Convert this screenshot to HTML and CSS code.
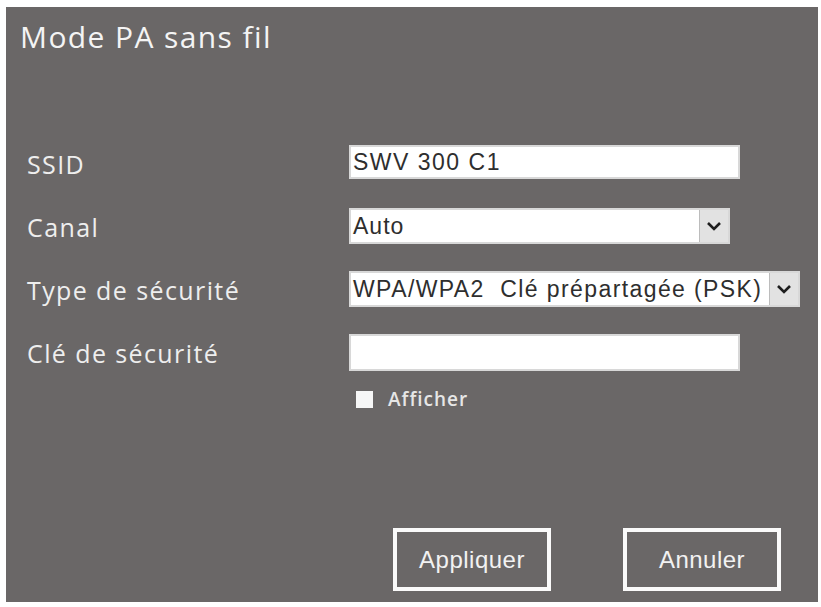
FILE: index.html
```html
<!DOCTYPE html>
<html lang="fr">
<head>
  <meta charset="UTF-8">
  <meta name="viewport" content="width=device-width, initial-scale=1.0">
  <title>Mode PA sans fil</title>
  <link rel="stylesheet" href="styles.css">
</head>
<body>
  <div class="panel">
    <h1 class="titre">Mode PA sans fil</h1>

    <div class="formulaire">
      <label class="etiquette" for="ssid">SSID</label>
      <input class="champ" id="ssid" type="text" value="SWV 300 C1">

      <label class="etiquette">Canal</label>
      <div class="liste liste-canal">
        <span class="valeur">Auto</span>
        <span class="fleche">
          <svg width="16" height="10" viewBox="0 0 16 10"><path d="M2 2 L8 8 L14 2" fill="none" stroke="#1e1e1e" stroke-width="2.6"/></svg>
        </span>
      </div>

      <label class="etiquette">Type de sécurité</label>
      <div class="liste liste-type">
        <span class="valeur">WPA/WPA2&nbsp; Clé prépartagée (PSK)</span>
        <span class="fleche">
          <svg width="16" height="10" viewBox="0 0 16 10"><path d="M2 2 L8 8 L14 2" fill="none" stroke="#1e1e1e" stroke-width="2.6"/></svg>
        </span>
      </div>

      <label class="etiquette" for="cle">Clé de sécurité</label>
      <input class="champ champ-cle" id="cle" type="password" value="">

      <label class="afficher"><span class="case"></span>Afficher</label>
    </div>

    <div class="boutons">
      <button class="bouton">Appliquer</button>
      <button class="bouton">Annuler</button>
    </div>
  </div>
</body>
</html>
```

FILE: styles.css
```css
body {
  margin: 0;
  background-color: #ffffff;
}

.panel {
  margin: 7px 3px 0 6px;
  height: 595px;
  box-sizing: border-box;
  background-color: #6a6767;
  padding: 10px 0 0 14px;
  display: flex;
  flex-direction: column;
}

.titre {
  margin: 0;
  font-family: "Open Sans", sans-serif;
  font-weight: normal;
  font-size: 30px;
  letter-spacing: 1.4px;
  color: #f4f4f4;
  line-height: 40px;
}

.formulaire {
  margin-top: 88px;
  padding-left: 7px;
  display: grid;
  grid-template-columns: 322px auto;
  grid-template-rows: repeat(4, 36px) auto;
  align-items: start;
  row-gap: 27px;
}

.etiquette {
  align-self: center;
  margin-top: 2px;
  font-family: "Open Sans", sans-serif;
  font-size: 25px;
  letter-spacing: 1.4px;
  color: #eeeeee;
  line-height: 34px;
}

.champ {
  width: 391px;
  height: 34px;
  box-sizing: border-box;
  margin: 0;
  border: 2px solid #d8d8d8;
  background-color: #ffffff;
  font-family: "Liberation Sans", Arial, sans-serif;
  font-size: 23px;
  letter-spacing: 1.5px;
  color: #2e2e2e;
  padding: 0 2px;
  outline: none;
}

.champ-cle {
  height: 37px;
}

.liste {
  display: flex;
  align-items: stretch;
  height: 36px;
  box-sizing: border-box;
  border: 2px solid #d8d8d8;
  background-color: #ffffff;
  font-family: "Liberation Sans", Arial, sans-serif;
  font-size: 23px;
  letter-spacing: 1px;
  color: #2e2e2e;
}

.liste-canal {
  width: 381px;
}

.liste-type {
  width: 451px;
  letter-spacing: 1.4px;
}

.valeur {
  flex: 1;
  padding-left: 2px;
  line-height: 32px;
  white-space: nowrap;
  overflow: hidden;
}

.fleche {
  width: 28px;
  display: flex;
  align-items: center;
  justify-content: center;
  background-color: #e2e2e2;
  border-left: 1px solid #bcbcbc;
}

.afficher {
  grid-column: 2;
  margin-top: -11px;
  display: flex;
  align-items: center;
  gap: 15px;
  padding-left: 7px;
  font-family: "Open Sans", sans-serif;
  font-weight: 600;
  font-size: 19px;
  letter-spacing: 1px;
  color: #e6e6e6;
}

.case {
  width: 17px;
  height: 17px;
  background-color: #f6f6f6;
}

.boutons {
  margin-top: auto;
  margin-bottom: 11px;
  display: flex;
  gap: 72px;
  padding-left: 373px;
}

.bouton {
  width: 158px;
  height: 63px;
  background-color: #6a6767;
  border: 4px solid #fafafa;
  color: #f2f2f2;
  font-family: "Liberation Sans", Arial, sans-serif;
  font-size: 24px;
  letter-spacing: 0.5px;
  padding: 0;
  cursor: pointer;
}
```
